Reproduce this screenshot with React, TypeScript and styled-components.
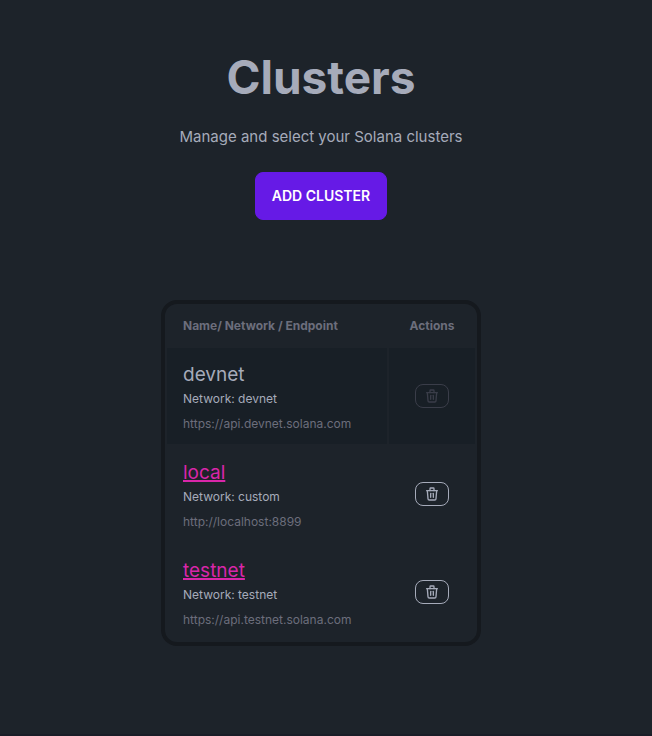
import React from "react";
import styled, { createGlobalStyle } from "styled-components";
import { TbTrash } from "react-icons/tb";

const GlobalStyle = createGlobalStyle`
  *, *::before, *::after { box-sizing: border-box; }
  body {
    margin: 0;
    background: #1d232a;
    color: #a6abba;
    font-family: Inter, "Liberation Sans", sans-serif;
    font-size: 15px;
    line-height: 24px;
  }
`;

const Page = styled.div`
  display: flex;
  flex-direction: column;
  min-height: 100vh;
`;

const Main = styled.main`
  flex: 1;
  display: flex;
  flex-direction: column;
  align-items: center;
  padding: 53px 20px 80px 10px;
`;

const Hero = styled.header`
  display: flex;
  flex-direction: column;
  align-items: center;
  text-align: center;
`;

const Title = styled.h1`
  margin: 0;
  font-size: 46px;
  line-height: 48px;
  font-weight: 700;
`;

const Subtitle = styled.p`
  margin: 24px 0 23px;
`;

const AddButton = styled.button`
  height: 48px;
  padding: 0 16px;
  border: 1px solid #661ae6;
  border-radius: 8px;
  background: #661ae6;
  color: #ffffff;
  font: 600 14px/14px Inter, "Liberation Sans", sans-serif;
  text-transform: uppercase;
  cursor: pointer;
`;

const TableFrame = styled.div`
  width: 100%;
  max-width: 320px;
  margin-top: 80px;
  border: 4px solid #15191e;
  border-radius: 16px;
`;

const Table = styled.table`
  width: 100%;
  border-collapse: separate;
  border-spacing: 2px;
  font-size: 12px;
  line-height: 16px;
`;

const HeadCell = styled.th<{ $centered?: boolean }>`
  padding: 12px 16px;
  width: ${(p) => (p.$centered ? "86px" : "auto")};
  text-align: ${(p) => (p.$centered ? "center" : "left")};
  color: #6c6e7c;
  font-weight: 700;
`;

const Row = styled.tr<{ $active: boolean }>`
  background: ${(p) => (p.$active ? "#181f26" : "transparent")};
`;

const Cell = styled.td<{ $centered?: boolean }>`
  padding: 12px 16px;
  text-align: ${(p) => (p.$centered ? "center" : "left")};
  vertical-align: middle;
`;

const Name = styled.div`
  font-size: 19px;
  line-height: 30px;
`;

const NameLink = styled.a`
  color: #d926a9;
  text-decoration: underline;
  text-decoration-thickness: 2px;
`;

const Network = styled.div`
  margin-top: 1px;
`;

const Endpoint = styled.div`
  margin-top: 9px;
  color: #6c6e7c;
`;

const DeleteButton = styled.button`
  display: inline-flex;
  align-items: center;
  justify-content: center;
  width: 34px;
  height: 24px;
  padding: 0;
  border: 1px solid #a6abba;
  border-radius: 8px;
  background: transparent;
  color: #a6abba;
  vertical-align: middle;
  cursor: pointer;

  &:disabled {
    border-color: #3a3d49;
    color: #3a3d49;
    cursor: default;
  }
`;

const Footer = styled.footer`
  height: 2px;
  background: #191d27;
`;

const clusters = [
  { name: "devnet", network: "devnet", endpoint: "https://api.devnet.solana.com", active: true },
  { name: "local", network: "custom", endpoint: "http://localhost:8899", active: false },
  { name: "testnet", network: "testnet", endpoint: "https://api.testnet.solana.com", active: false },
];

export default function App() {
  return (
    <Page>
      <GlobalStyle />
      <Main>
        <Hero>
          <Title>Clusters</Title>
          <Subtitle>Manage and select your Solana clusters</Subtitle>
          <AddButton type="button">Add Cluster</AddButton>
        </Hero>
        <TableFrame>
          <Table>
            <thead>
              <tr>
                <HeadCell scope="col">Name/ Network / Endpoint</HeadCell>
                <HeadCell scope="col" $centered>Actions</HeadCell>
              </tr>
            </thead>
            <tbody>
              {clusters.map((c) => (
                <Row key={c.name} $active={c.active}>
                  <Cell>
                    <Name>{c.active ? c.name : <NameLink href={`#${c.name}`}>{c.name}</NameLink>}</Name>
                    <Network>Network: {c.network}</Network>
                    <Endpoint>{c.endpoint}</Endpoint>
                  </Cell>
                  <Cell $centered>
                    <DeleteButton type="button" disabled={c.active} aria-label={`Delete ${c.name}`}>
                      <TbTrash size={16} />
                    </DeleteButton>
                  </Cell>
                </Row>
              ))}
            </tbody>
          </Table>
        </TableFrame>
      </Main>
      <Footer />
    </Page>
  );
}
